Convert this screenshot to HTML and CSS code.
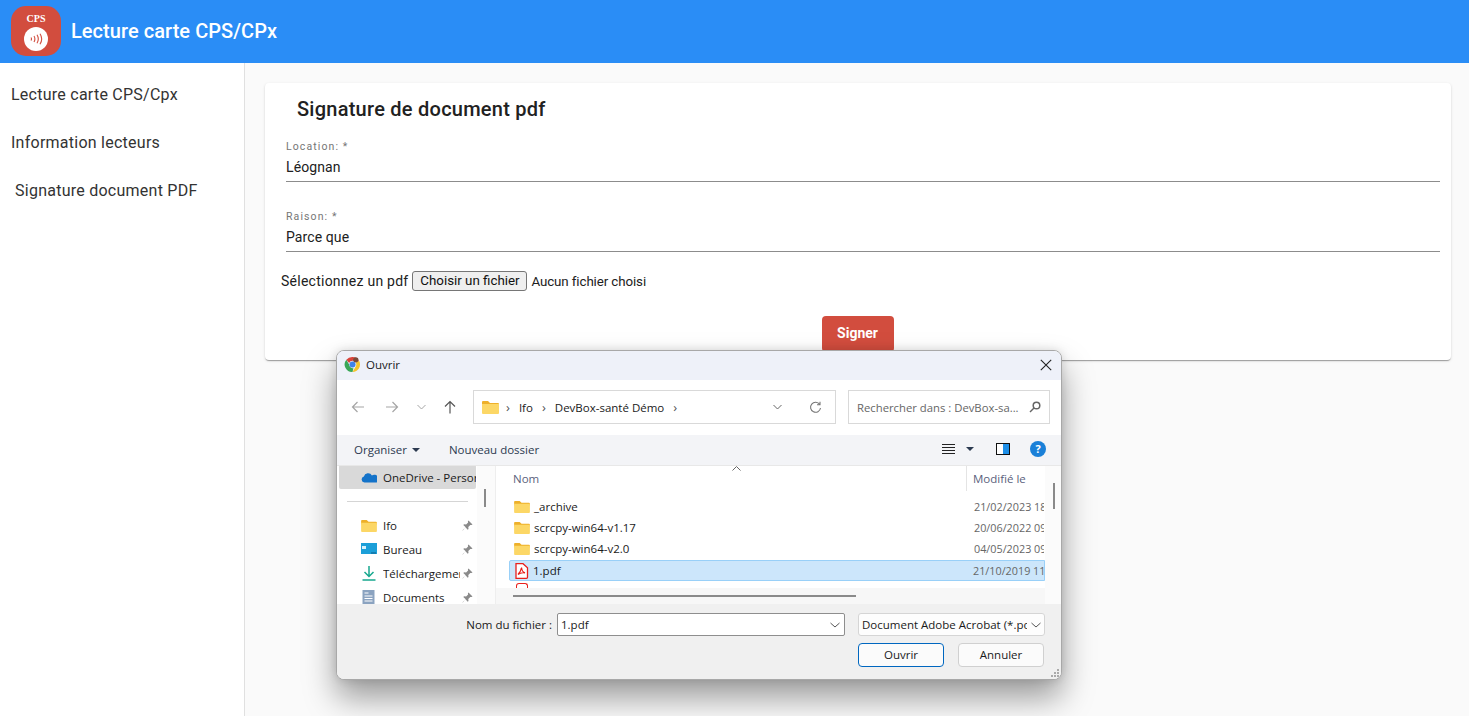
FILE: index.html
```html
<!DOCTYPE html>
<html lang="fr">
<head>
    <meta charset="UTF-8">
    <meta name="viewport" content="width=device-width, initial-scale=1.0">
    <title>Lecture carte CPS/CPx</title>
    <link rel="stylesheet" href="styles.css">
</head>
<body>

    <header class="topbar">
        <div class="logo">
            <span class="logo-text">CPS</span>
            <span class="logo-disc">
                <svg width="16" height="12" viewBox="0 0 16 12" fill="none" stroke="#d24d3e" stroke-width="1.1">
                    <path d="M3 4.5q1 1.5 0 3M6 3q1.8 3 0 6M9 1.8q2.6 4.2 0 8.4M12 .8q3.4 5.2 0 10.4"/>
                </svg>
            </span>
        </div>
        <h1>Lecture carte CPS/CPx</h1>
    </header>

    <div class="layout">
        <nav class="sidebar">
            <a>Lecture carte CPS/Cpx</a>
            <a>Information lecteurs</a>
            <a class="indent">Signature document PDF</a>
        </nav>

        <main class="content">
            <section class="card">
                <h2>Signature de document pdf</h2>
                <div class="field">
                    <label>Location: *</label>
                    <div class="value">Léognan</div>
                </div>
                <div class="field">
                    <label>Raison: *</label>
                    <div class="value">Parce que</div>
                </div>
                <div class="file-row">
                    <span class="file-label">Sélectionnez un pdf</span>
                    <span class="file-btn">Choisir un fichier</span>
                    <span class="file-none">Aucun fichier choisi</span>
                </div>
                <div class="actions"><span class="sign-btn">Signer</span></div>
            </section>
        </main>
    </div>

    <div class="dialog">
        <div class="dlg-title">
            <svg class="chrome" width="17" height="17" viewBox="0 0 18 18">
                <path d="M9 1a8 8 0 0 1 6.9 4H9a4 4 0 0 0-3.6 2.3L2.500 3.900A8 8 0 0 1 9 1z" fill="#d9443a"/>
                <path d="M15.900 5A8 8 0 0 1 9 17l3.400-5.900A4 4 0 0 0 12.500 7z" fill="#f5c42c"/>
                <path d="M9 17A8 8 0 0 1 2.500 3.900L5.400 9A4 4 0 0 0 10 12.900z" fill="#3aa757"/>
                <circle cx="9" cy="9" r="3.200" fill="#3f83ea"/>
                <circle cx="12.500" cy="4" r="2.800" fill="#7a4a3a"/>
            </svg>
            <span>Ouvrir</span>
            <svg class="close" width="12" height="12" viewBox="0 0 12 12" stroke="#222" stroke-width="1.100"><path d="M.8.8l10.400 10.400M11.200.8L.8 11.200"/></svg>
        </div>

        <div class="dlg-nav">
            <div class="nav-arrows">
                <svg width="14" height="12" viewBox="0 0 14 12" fill="none" stroke="#a5a5a5" stroke-width="1.200"><path d="M13 6H1.500M6.500 1l-5 5 5 5"/></svg>
                <svg width="14" height="12" viewBox="0 0 14 12" fill="none" stroke="#a5a5a5" stroke-width="1.200"><path d="M1 6h11.500M7.500 1l5 5-5 5"/></svg>
                <svg width="9" height="6" viewBox="0 0 9 6" fill="none" stroke="#a5a5a5"><path d="M.5 1l4 4 4-4"/></svg>
                <svg width="12" height="14" viewBox="0 0 12 14" fill="none" stroke="#555" stroke-width="1.200"><path d="M6 13.500V1.500M1 6.500l5-5 5 5"/></svg>
            </div>
            <div class="address">
                <svg class="folder" width="17" height="14" viewBox="0 0 17 14"><use href="#folder-shape"/></svg>
                <span class="crumb-sep first">›</span>
                <span>Ifo</span>
                <span class="crumb-sep">›</span>
                <span>DevBox-santé Démo</span>
                <span class="crumb-sep">›</span>
                <svg class="addr-chev" width="9" height="6" viewBox="0 0 9 6" fill="none" stroke="#666"><path d="M.5 1l4 4 4-4"/></svg>
                <svg class="addr-refresh" width="13" height="13" viewBox="0 0 13 13" fill="none" stroke="#777" stroke-width="1.100"><path d="M10.700 3.500A5 5 0 1 0 11.500 7M11 .8v3h-3"/></svg>
            </div>
            <div class="search">
                <span>Rechercher dans : DevBox-sa...</span>
                <svg width="12" height="12" viewBox="0 0 12 12" fill="none" stroke="#666" stroke-width="1.500"><circle cx="7.500" cy="4.500" r="3.300"/><path d="M5 7l-4 4"/></svg>
            </div>
        </div>

        <div class="dlg-tools">
            <span class="tool-org">Organiser <i class="caret"></i></span>
            <span class="tool-new">Nouveau dossier</span>
            <svg class="tool-view" width="13" height="11" viewBox="0 0 13 11" stroke="#222"><path d="M0 .5h13M0 3.500h13M0 6.500h13M0 9.500h13"/></svg>
            <i class="caret dark"></i>
            <span class="tool-pane"></span>
            <span class="tool-help">?</span>
        </div>

        <div class="dlg-body">
            <div class="tree">
                <div class="tree-item active">
                    <svg width="16" height="11" viewBox="0 0 16 11"><path d="M3.500 10.500a3 3 0 0 1-.6-5.900 4.300 4.300 0 0 1 8-1.200 3.600 3.600 0 0 1 4.600 7.100z" fill="#1473c9"/></svg>
                    <span class="tree-name">OneDrive - Personal</span>
                </div>
                <div class="tree-sep"></div>
                <div class="tree-item">
                    <svg width="16" height="13" viewBox="0 0 17 14"><use href="#folder-shape"/></svg>
                    <span class="tree-name">Ifo</span>
                    <svg class="pin" width="11" height="11" viewBox="0 0 11 11"><use href="#pin-shape"/></svg>
                </div>
                <div class="tree-item">
                    <svg width="16" height="12" viewBox="0 0 16 12"><rect width="16" height="11" fill="#1c9fd8"/><rect x="1" y="3" width="4" height="3" fill="#d8f1fb"/><rect x="10" y="9.500" width="5" height="1" fill="#0d5f8c"/></svg>
                    <span class="tree-name">Bureau</span>
                    <svg class="pin" width="11" height="11" viewBox="0 0 11 11"><use href="#pin-shape"/></svg>
                </div>
                <div class="tree-item">
                    <svg width="13" height="15" viewBox="0 0 13 15" fill="none" stroke="#17a88f" stroke-width="1.500"><path d="M6.500 0v10M2 6l4.500 4.500L11 6M0 14h13"/></svg>
                    <span class="tree-name clip">Téléchargements</span>
                    <svg class="pin" width="11" height="11" viewBox="0 0 11 11"><use href="#pin-shape"/></svg>
                </div>
                <div class="tree-item">
                    <svg width="13" height="15" viewBox="0 0 13 15"><rect width="12" height="15" fill="#8ba3c0"/><path d="M2 3h4M2 6h8M2 8.500h8M2 11h8" stroke="#fff"/></svg>
                    <span class="tree-name">Documents</span>
                    <svg class="pin" width="11" height="11" viewBox="0 0 11 11"><use href="#pin-shape"/></svg>
                </div>
            </div>
            <div class="tree-scroll"><span></span></div>
            <div class="files">
                <div class="files-head">
                    <span class="col-name">Nom</span>
                    <span class="col-date">Modifié le</span>
                    <svg class="sort" width="9" height="5" viewBox="0 0 9 5" fill="none" stroke="#666"><path d="M.5 4.500l4-4 4 4"/></svg>
                </div>
                <div class="file-list">
                    <div class="file"><svg width="16" height="13" viewBox="0 0 17 14"><use href="#folder-shape"/></svg><span class="f-name">_archive</span><span class="f-date">21/02/2023 18</span></div>
                    <div class="file"><svg width="16" height="13" viewBox="0 0 17 14"><use href="#folder-shape"/></svg><span class="f-name">scrcpy-win64-v1.17</span><span class="f-date">20/06/2022 09</span></div>
                    <div class="file"><svg width="16" height="13" viewBox="0 0 17 14"><use href="#folder-shape"/></svg><span class="f-name">scrcpy-win64-v2.0</span><span class="f-date">04/05/2023 09</span></div>
                    <div class="file selected"><svg width="15" height="16" viewBox="0 0 14 16"><use href="#pdf-shape"/></svg><span class="f-name">1.pdf</span><span class="f-date">21/10/2019 11</span></div>
                </div>
                <div class="next-pdf"></div>
                <div class="hscroll"><span></span></div>
            </div>
            <div class="vscroll"><span></span></div>
        </div>

        <div class="dlg-foot">
            <div class="foot-row">
                <span class="foot-label">Nom du fichier :</span>
                <div class="foot-input">1.pdf<svg width="10" height="6" viewBox="0 0 10 6" fill="none" stroke="#555"><path d="M.5 1l4.500 4 4.500-4"/></svg></div>
                <div class="foot-type"><span>Document Adobe Acrobat (*.pdf)</span><svg width="10" height="6" viewBox="0 0 10 6" fill="none" stroke="#555"><path d="M.5 1l4.500 4 4.500-4"/></svg></div>
            </div>
            <div class="foot-btns">
                <span class="dlg-btn primary">Ouvrir</span>
                <span class="dlg-btn">Annuler</span>
            </div>
            <svg class="grip" width="10" height="10" viewBox="0 0 10 10" fill="#aaa"><rect x="7" y="1" width="2" height="2"/><rect x="4" y="4" width="2" height="2"/><rect x="7" y="4" width="2" height="2"/><rect x="1" y="7" width="2" height="2"/><rect x="4" y="7" width="2" height="2"/><rect x="7" y="7" width="2" height="2"/></svg>
        </div>
    </div>

    <!-- formes reutilisees -->
    <svg class="defs" width="0" height="0">
        <defs>
            <g id="folder-shape">
                <path d="M0 2a1 1 0 0 1 1-1h5l2 2h8a1 1 0 0 1 1 1v2H0z" fill="#eeb02a"/>
                <path d="M0 4h17v9a1 1 0 0 1-1 1H1a1 1 0 0 1-1-1z" fill="#fcd766"/>
            </g>
            <path id="pin-shape" d="M6.500.5l4 4-1 .6-1.200-.2-2 2 .2 2-.8.8-2.200-2.400L.8 10.500l-.3-.3 3.200-3-2.400-2.200.8-.8 2 .2 2-2-.2-1.200z" fill="#8a8a8a"/>
            <g id="pdf-shape">
                <path d="M1.500.7h7l4.500 4v9.600a1 1 0 0 1-1 1h-10.500z" fill="#fff" stroke="#e8201c" stroke-width="1.300"/>
                <path d="M7 4.500c-.5 3-1.800 5.500-3.600 7M7 4.500c.4 3 1.800 5 3.600 5.400M3.400 11.500c2-1.500 4.700-2 7.200-1.600" fill="none" stroke="#e8201c" stroke-width="1.200"/>
            </g>
        </defs>
    </svg>

</body>
</html>
```

FILE: styles.css
```css
* {
    box-sizing: border-box;
}

body {
    margin: 0;
    height: 716px;
    overflow: hidden;
    font-family: Roboto, Arial, sans-serif;
    color: #212121;
    background: #fafafa;
    position: relative;
}

.topbar {
    height: 63px;
    background: #2a8df6;
    display: flex;
    align-items: center;
    padding-left: 11px;
    padding-bottom: 1px;
}

.topbar h1 {
    margin: 0 0 0 10px;
    font-size: 20px;
    font-weight: 500;
    letter-spacing: .05px;
    color: #fff;
}

.logo {
    width: 50px;
    height: 50px;
    border-radius: 15px;
    background: #d24d3e;
    display: flex;
    flex-direction: column;
    align-items: center;
    padding-top: 8px;
}

.logo-text {
    font-family: "Liberation Serif", serif;
    font-size: 10px;
    font-weight: bold;
    line-height: 10px;
    color: #fff;
}

.logo-disc {
    margin-top: 3px;
    width: 24px;
    height: 24px;
    border-radius: 50%;
    background: #fff;
    display: flex;
    align-items: center;
    justify-content: center;
}

.layout {
    display: flex;
    height: 653px;
}

.sidebar {
    width: 245px;
    background: #fff;
    border-right: 1px solid #e0e0e0;
    padding-top: 8px;
    display: flex;
    flex-direction: column;
}

.sidebar a {
    height: 48px;
    line-height: 48px;
    padding-left: 11px;
    font-size: 16px;
    letter-spacing: .25px;
    color: #333;
}

.sidebar a.indent {
    padding-left: 15px;
}

.content {
    flex: 1;
    padding: 20px 18px 0 20px;
}

.card {
    height: 277px;
    background: #fff;
    border-radius: 4px;
    box-shadow: 0 2px 1px -1px rgba(0,0,0,.2), 0 1px 1px 0 rgba(0,0,0,.14), 0 1px 3px 0 rgba(0,0,0,.12);
    padding: 0 11px 0 21px;
}

.card h2 {
    margin: 0;
    padding: 14px 0 0 11px;
    height: 57px;
    font-size: 20px;
    font-weight: 500;
    letter-spacing: .25px;
    line-height: 24px;
}

.field {
    height: 70px;
}

.field label {
    display: block;
    font-size: 10.500px;
    letter-spacing: 1.100px;
    line-height: 13px;
    color: #757575;
}

.field .value {
    height: 29px;
    line-height: 26px;
    font-size: 14px;
    letter-spacing: .1px;
    border-bottom: 1px solid #8c8c8c;
    padding-top: 1px;
}

.file-row {
    margin: -10px 0 0 -5px;
    display: flex;
    align-items: center;
    gap: 4px;
    font-size: 14px;
    height: 21px;
}

.file-label {
    letter-spacing: .25px;
}

.file-none {
    padding-top: 1px;
    font-size: 13.330px;
    letter-spacing: -.1px;
}

.file-btn {
    height: 20px;
    width: 115px;
    margin-top: 1px;
    line-height: 18px;
    text-align: center;
    font-size: 13.330px;
    background: #efefef;
    border: 1px solid #767676;
    border-radius: 3px;
    color: #111;
}

.actions {
    display: flex;
    justify-content: center;
    margin-top: 25px;
    padding-right: 11px;
}

.sign-btn {
    width: 72px;
    height: 36px;
    border-radius: 4px;
    background: #d24d3e;
    color: #fff;
    font-size: 14px;
    font-weight: 700;
    line-height: 34px;
    text-align: center;
}

/* fenetre de dialogue windows */
.dialog {
    position: absolute;
    left: 336px;
    top: 350px;
    width: 726px;
    height: 330px;
    border-radius: 8px;
    overflow: hidden;
    background: #fff;
    border: 1px solid #a8a8a8;
    box-shadow: 0 18px 32px rgba(0,0,0,.38), 0 0 10px rgba(0,0,0,.12);
    font-family: "Open Sans", "Noto Sans", sans-serif;
    font-size: 11.500px;
    color: #1a1a1a;
    display: flex;
    flex-direction: column;
}

.dlg-title {
    height: 29px;
    flex: none;
    background: #eef1f9;
    display: flex;
    align-items: center;
    padding: 0 9px 2px 7px;
    gap: 5px;
}

.dlg-title .close {
    margin-left: auto;
}

.dlg-nav {
    height: 55px;
    flex: none;
    background: #fff;
    display: flex;
    align-items: center;
    padding: 0 10px 1px 14px;
}

.nav-arrows {
    width: 122px;
    flex: none;
    display: flex;
    align-items: center;
    gap: 20px;
}

.nav-arrows svg:nth-child(3) {
    margin: 0 -2px;
}

.address {
    width: 363px;
    flex: none;
    height: 34px;
    border: 1px solid #d9d9d9;
    display: flex;
    align-items: center;
    padding-left: 8px;
    gap: 9px;
}

.crumb-sep {
    color: #555;
    font-size: 13px;
    line-height: 14px;
}

.crumb-sep.first {
    margin-left: -2px;
}

.addr-chev {
    margin-left: auto;
}

.addr-refresh {
    margin: 0 13px 0 18px;
}

.search {
    width: 202px;
    flex: none;
    height: 34px;
    margin-left: 12px;
    border: 1px solid #d9d9d9;
    display: flex;
    align-items: center;
    justify-content: space-between;
    padding: 0 8px;
    color: #666;
    font-size: 11.300px;
    white-space: nowrap;
}

.dlg-tools {
    height: 30px;
    flex: none;
    background: #f3f4f7;
    display: flex;
    align-items: center;
    padding: 0 15px 2px 17px;
    color: #2c3a50;
}

.caret {
    display: inline-block;
    width: 0;
    height: 0;
    margin-left: 2px;
    vertical-align: 2px;
    border-left: 4px solid transparent;
    border-right: 4px solid transparent;
    border-top: 4px solid #2c3a50;
}

.tool-new {
    margin-left: 29px;
}

.tool-view {
    margin-left: auto;
}

.caret.dark {
    margin-left: 11px;
}

.tool-pane {
    width: 14px;
    height: 12px;
    margin-left: 22px;
    border: 1px solid #111;
    background: linear-gradient(to right, #fff 50%, #1e8fe8 50%);
}

.tool-help {
    width: 16px;
    height: 16px;
    margin-left: 20px;
    border-radius: 50%;
    background: #1a80d8;
    color: #fff;
    font-weight: bold;
    font-size: 11px;
    line-height: 16px;
    text-align: center;
}

.dlg-body {
    flex: 1;
    min-height: 0;
    display: flex;
    background: #fff;
    border-top: 1px solid #e8e8e8;
}

.tree {
    width: 140px;
    overflow: hidden;
    padding: 0 1px 0 2px;
}

.tree-item {
    height: 24px;
    display: flex;
    align-items: center;
    padding-left: 22px;
    gap: 6px;
    position: relative;
    white-space: nowrap;
    overflow: hidden;
}

.tree-item svg:first-child {
    flex: none;
    width: 16px;
}

.tree-item.active {
    margin-top: -1px;
    background: #d9d9d9;
    border-radius: 2px;
}

.tree-name {
    overflow: hidden;
}

.tree-name.clip {
    width: 77px;
    flex: none;
}

.pin {
    position: absolute;
    right: 3px;
    top: 7px;
}

.tree-sep {
    height: 1px;
    margin: 12px 8px 11px 8px;
    background: #d5d5d5;
}

.tree-scroll {
    width: 19px;
    border-right: 1px solid #eee;
    background: #fbfbfb;
    padding: 23px 0 0 7px;
}

.tree-scroll span {
    display: block;
    width: 2px;
    height: 18px;
    background: #8a8a8a;
}

.files {
    flex: 1;
    min-width: 0;
    position: relative;
    overflow: hidden;
}

.files-head {
    height: 26px;
    padding-bottom: 2px;
    display: flex;
    align-items: center;
    color: #5b5f7c;
    position: relative;
}

.col-name {
    padding-left: 17px;
    width: 470px;
}

.col-date {
    flex: 1;
    height: 26px;
    line-height: 28px;
    padding-left: 6px;
    border-left: 1px solid #e4e4e4;
}

.sort {
    position: absolute;
    left: 236px;
    top: 0;
}

.file-list {
    padding: 4px 0 0 13px;
}

.file {
    height: 21px;
    display: flex;
    align-items: center;
    gap: 4px;
    padding-left: 4px;
    border: 1px solid transparent;
    white-space: nowrap;
    overflow: hidden;
}

.file svg {
    flex: none;
}

.f-name {
    width: 436px;
    flex: none;
}

.f-date {
    color: #666;
    font-size: 10.800px;
}

.file.selected {
    margin-top: 1px;
    background: #cce6fb;
    border-color: #99d0f8;
    border-radius: 2px 0 0 2px;
}

.next-pdf {
    width: 12px;
    height: 6px;
    margin: 2px 0 0 20px;
    border: 1px solid #e8201c;
    border-bottom: none;
    border-radius: 3px 3px 0 0;
}

.hscroll {
    position: absolute;
    left: 0;
    right: 0;
    bottom: 0;
    height: 16px;
    background: #f7f7f7;
    padding: 7px 0 0 17px;
}

.hscroll span {
    display: block;
    width: 343px;
    height: 2px;
    background: #8a8a8a;
}

.vscroll {
    width: 16px;
    background: #fbfbfb;
    padding: 17px 0 0 8px;
}

.vscroll span {
    display: block;
    width: 2px;
    height: 26px;
    background: #8a8a8a;
}

.dlg-foot {
    height: 75px;
    flex: none;
    background: #f0f0f0;
    position: relative;
    padding: 9px 16px 0 0;
}

.foot-row {
    display: flex;
    align-items: center;
    justify-content: flex-end;
    height: 23px;
}

.foot-label {
    margin-right: 5px;
}

.foot-input {
    width: 288px;
    height: 23px;
    background: #fff;
    border: 1px solid #8e8e8e;
    border-radius: 2px;
    display: flex;
    align-items: center;
    justify-content: space-between;
    padding: 0 4px 0 3px;
}

.foot-type {
    width: 187px;
    height: 23px;
    margin-left: 13px;
    background: #fdfdfd;
    border: 1px solid #d5d5d5;
    border-radius: 3px;
    display: flex;
    align-items: center;
    justify-content: space-between;
    padding: 0 3px;
}

.foot-type span {
    width: 165px;
    overflow: hidden;
    white-space: nowrap;
}

.foot-btns {
    display: flex;
    justify-content: flex-end;
    gap: 14px;
    margin-top: 7px;
    padding-right: 1px;
}

.dlg-btn {
    width: 86px;
    height: 24px;
    line-height: 22px;
    text-align: center;
    background: #fbfbfb;
    border: 1px solid #d0d0d0;
    border-radius: 4px;
}

.dlg-btn.primary {
    border-color: #0067c0;
}

.grip {
    position: absolute;
    right: 1px;
    bottom: 1px;
}

.defs {
    position: absolute;
}
```
